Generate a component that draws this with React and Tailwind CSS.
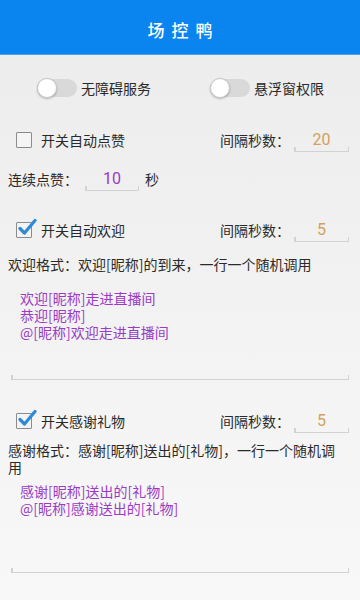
import React from "react";

const font = { fontFamily: '"Noto Sans CJK SC", "Noto Sans", sans-serif' };

function Toggle({ label }) {
  return (
    <div className="flex items-center">
      <div className="relative w-[40px] h-[18px] rounded-full bg-[#d9d9d9]">
        <div className="absolute left-0 top-[-1px] w-[20px] h-[20px] rounded-full bg-white border border-[#c8c8c8] shadow-[0_1px_2px_rgba(0,0,0,0.25)]" />
      </div>
      <span className="ml-[4px] text-[14px] leading-[17px] text-[#2a2a2a]">{label}</span>
    </div>
  );
}

function CheckBox({ checked }) {
  return (
    <div className="relative w-[16px] h-[16px] border-[1.5px] border-[#8c8c8c] bg-[#f4f4f4] rounded-[1px]">
      {checked && (
        <svg className="absolute left-[1px] top-[-5px]" width="19" height="19" viewBox="0 0 19 19">
          <path d="M2 10.5 L6.5 15 L17 2.5" fill="none" stroke="#2f8ad6" strokeWidth="3.2" strokeLinecap="round" strokeLinejoin="round" />
        </svg>
      )}
    </div>
  );
}

function NumInput({ value, color, width }) {
  return (
    <div className={`relative ${width} h-[24px] flex items-center justify-center border-b-[1.5px] border-[#d2d2d2]`}>
      <span className={`text-[16px] leading-[18px] ${color}`} style={{ fontFamily: '"Roboto", "Noto Sans", sans-serif' }}>{value}</span>
      <span className="absolute left-0 bottom-0 w-[1.5px] h-[4px] bg-[#d2d2d2]" />
      <span className="absolute right-0 bottom-0 w-[1.5px] h-[4px] bg-[#d2d2d2]" />
    </div>
  );
}

function SwitchRow({ checked, label, value, mt }) {
  return (
    <div className={`flex items-center h-[24px] ${mt}`}>
      <div className="w-[220px] flex items-center pl-[16px]">
        <CheckBox checked={checked} />
        <span className="ml-[9px] text-[14px] leading-[17px] text-[#2a2a2a]">{label}</span>
      </div>
      <span className="text-[14px] leading-[17px] text-[#2a2a2a]">间隔秒数：</span>
      <div className="ml-[4px]">
        <NumInput value={value} color="text-[#d4a05a]" width="w-[55px]" />
      </div>
    </div>
  );
}

function TextArea({ lines, mt }) {
  return (
    <div className={`relative ml-[11px] w-[338px] h-[96px] pt-[6px] pl-[9px] border-b-[1.5px] border-[#d2d2d2] ${mt}`}>
      {lines.map((l) => (
        <div key={l} className="text-[14px] leading-[17px] text-[#9a3ac6]">{l}</div>
      ))}
      <span className="absolute left-0 bottom-0 w-[1.5px] h-[4px] bg-[#d2d2d2]" />
      <span className="absolute right-0 bottom-0 w-[1.5px] h-[4px] bg-[#d2d2d2]" />
    </div>
  );
}

export default function App() {
  return (
    <div className="w-[360px] min-h-[600px] bg-gradient-to-b from-[#ececec] to-[#f8f8f8] overflow-hidden" style={font}>
      <div className="h-[55px] bg-[#0a85ef] border-b border-[#4aa3f2] flex items-center justify-center">
        <span className="text-white text-[17px] font-medium tracking-[7px] pl-[7px] mt-[6px]">场控鸭</span>
      </div>

      <div className="flex items-center mt-[24px] pl-[37px] gap-[59px] h-[18px]">
        <Toggle label="无障碍服务" />
        <Toggle label="悬浮窗权限" />
      </div>

      <SwitchRow checked={false} label="开关自动点赞" value="20" mt="mt-[31px]" />

      <div className="flex items-center h-[24px] mt-[15px] pl-[8px]">
        <span className="text-[14px] leading-[17px] text-[#2a2a2a]">连续点赞：</span>
        <div className="ml-[7px]">
          <NumInput value="10" color="text-[#9a3ac6]" width="w-[54px]" />
        </div>
        <span className="ml-[6px] text-[14px] leading-[17px] text-[#2a2a2a]">秒</span>
      </div>

      <SwitchRow checked={true} label="开关自动欢迎" value="5" mt="mt-[27px]" />

      <div className="mt-[14px] pl-[8px] pr-[14px] text-[14px] leading-[17px] text-[#2a2a2a]">
        欢迎格式：欢迎[昵称]的到来，一行一个随机调用
      </div>

      <TextArea mt="mt-[11px]" lines={["欢迎[昵称]走进直播间", "恭迎[昵称]", "@[昵称]欢迎走进直播间"]} />

      <SwitchRow checked={true} label="开关感谢礼物" value="5" mt="mt-[29px]" />

      <div className="mt-[9px] pl-[8px] pr-[14px] text-[14px] leading-[17px] text-[#2a2a2a]">
        感谢格式：感谢[昵称]送出的[礼物]，一行一个随机调用
      </div>

      <TextArea mt="mt-[1px]" lines={["感谢[昵称]送出的[礼物]", "@[昵称]感谢送出的[礼物]"]} />
    </div>
  );
}
